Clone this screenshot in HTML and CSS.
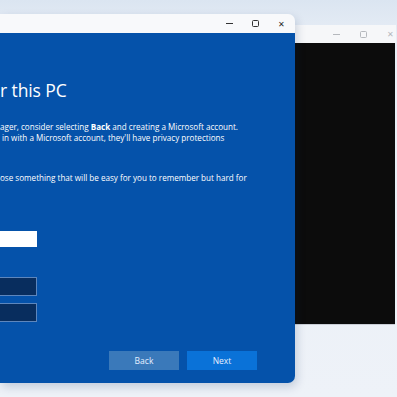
FILE: index.html
```html
<!DOCTYPE html>
<html lang="en">
<head>
    <meta charset="UTF-8">
    <title>Create a user for this PC</title>
    <link rel="stylesheet" href="styles.css">
</head>
<body>
    <div class="desktop">
        <div class="win front">
            <div class="titlebar">
                <span class="ctl min"></span>
                <span class="ctl max"></span>
                <span class="ctl close">&#x2715;</span>
            </div>
            <div class="content">
                <h1>r this PC</h1>
                <p class="text">
                    <span>ager, consider selecting <b>Back</b> and creating a Microsoft account.</span>
                    <span class="cont">in with a Microsoft account, they'll have privacy protections</span>
                </p>
                <p class="text second">
                    <span>ose something that will be easy for you to remember but hard for</span>
                </p>
                <div class="field light"></div>
                <div class="field dark first"></div>
                <div class="field dark"></div>
                <div class="actions">
                    <button class="btn back">Back</button>
                    <button class="btn next">Next</button>
                </div>
            </div>
        </div>
        <div class="win rear">
            <div class="titlebar">
                <span class="ctl min"></span>
                <span class="ctl max"></span>
                <span class="ctl close">&#x2715;</span>
            </div>
            <div class="console"></div>
        </div>
    </div>
</body>
</html>
```

FILE: styles.css
```css
html, body {
    margin: 0;
    height: 100%;
}
body {
    font-family: "Open Sans", "Noto Sans", sans-serif;
    background: linear-gradient(180deg, #dbe5f1 0px, #e8eef6 40px, #eef2f8 100%);
    overflow: hidden;
}
.desktop {
    display: flex;
    align-items: flex-start;
    height: 397px;
}
.win {
    display: flex;
    flex-direction: column;
}
.front {
    width: 295px;
    margin-top: 14px;
    border-radius: 0 7px 7px 0;
    overflow: hidden;
    box-shadow: 2px 4px 10px rgba(0, 40, 90, 0.18);
    position: relative;
    z-index: 2;
}
.titlebar {
    height: 19px;
    background: #f8f9fb;
    display: flex;
    justify-content: flex-end;
    align-items: center;
    padding-right: 10px;
    gap: 19px;
}
.ctl {
    width: 7px;
    height: 7px;
    display: flex;
    align-items: center;
    justify-content: center;
    color: #2a2a2a;
    font-size: 8px;
    line-height: 1;
    overflow: visible;
}
.ctl.min::before {
    content: "";
    width: 7px;
    height: 1px;
    background: #333;
}
.ctl.max {
    box-sizing: border-box;
    border: 1px solid #333;
    border-radius: 1.5px;
}
.content {
    background: #0552aa;
    height: 350px;
    color: #fff;
    display: flex;
    flex-direction: column;
}
h1 {
    margin: 46px 0 0;
    font-size: 17.5px;
    font-weight: 400;
    line-height: 22px;
    letter-spacing: -0.1px;
}
.text {
    margin: 20px 0 0;
    font-size: 8.1px;
    line-height: 11px;
}
.text span {
    display: block;
    white-space: nowrap;
}
.text b {
    font-weight: 700;
}
.text .cont {
    padding-left: 2px;
}
.text.second {
    margin-top: 29px;
}
.field {
    width: 37px;
    box-sizing: border-box;
}
.field.light {
    height: 16px;
    margin-top: 48px;
    background: #ffffff;
}
.field.dark {
    height: 19px;
    margin-top: 7px;
    background: #082d5e;
    border: 1px solid #5d86bd;
    border-left: none;
}
.field.dark.first {
    margin-top: 30px;
}
.actions {
    display: flex;
    justify-content: flex-end;
    gap: 8px;
    padding-right: 38px;
    margin-top: 29px;
}
.btn {
    width: 70px;
    height: 19px;
    border: none;
    padding: 0;
    font-family: inherit;
    font-size: 8.5px;
    color: #e6efff;
}
.btn.back {
    background: #3a79ba;
}
.btn.next {
    background: #0a72d8;
}
.rear {
    width: 101px;
    margin-top: 25px;
    z-index: 1;
}
.rear .titlebar {
    height: 18px;
    background: #f6f7f9;
    padding-right: 2px;
    gap: 20px;
}
.rear .ctl {
    color: #b5b8bd;
}
.rear .ctl.min::before {
    background: #b5b8bd;
}
.rear .ctl.max {
    border-color: #b5b8bd;
}
.console {
    height: 281px;
    background: #0c0c0c;
    margin-right: 1px;
    border-bottom: 1px solid #c9ced6;
}
```
